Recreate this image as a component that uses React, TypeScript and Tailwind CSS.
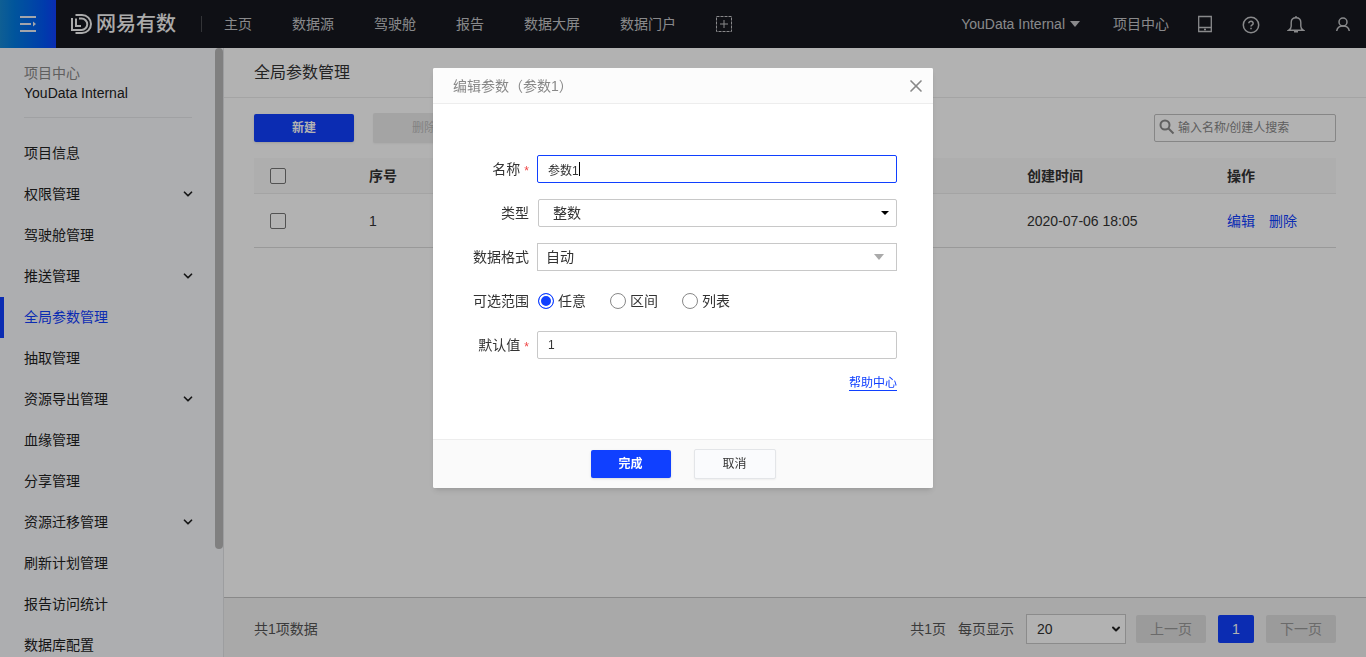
import React, { useState } from 'react';
import { ChevronDown, X } from 'lucide-react';

interface MenuItem {
  label: string;
  expandable?: boolean;
  active?: boolean;
}

const navItems = ['主页', '数据源', '驾驶舱', '报告', '数据大屏', '数据门户'];

const menuItems: MenuItem[] = [
  { label: '项目信息' },
  { label: '权限管理', expandable: true },
  { label: '驾驶舱管理' },
  { label: '推送管理', expandable: true },
  { label: '全局参数管理', active: true },
  { label: '抽取管理' },
  { label: '资源导出管理', expandable: true },
  { label: '血缘管理' },
  { label: '分享管理' },
  { label: '资源迁移管理', expandable: true },
  { label: '刷新计划管理' },
  { label: '报告访问统计' },
  { label: '数据库配置' }
];

const ranges = ['任意', '区间', '列表'];

const Logo = () => (
  <svg width="21" height="20" viewBox="0 0 21 20" fill="none" stroke="currentColor" strokeWidth="2">
    <path d="M1 4v12h9.500a5.700 5.700 0 0 0 0-11.500H8" />
    <path d="M4.500 1H11a9 9 0 0 1 0 18H4.500" />
    <path d="M5 4.500v7.500h5" />
  </svg>
);

const Header = () => (
  <header className="flex h-12 shrink-0 items-center bg-[#16181f] text-sm text-[#c4c5c8]">
    <button
      aria-label="菜单"
      className="flex h-12 w-14 items-center justify-center bg-gradient-to-r from-[#1688d4] to-[#1040ff] text-[#e8ecf5]"
    >
      <svg width="16" height="16" viewBox="0 0 16 16" fill="currentColor">
        <path d="M0 0h16v2H0zM0 7h11v2H0zM0 14h16v2H0zM13 5.500l3 2.500-3 2.500z" />
      </svg>
    </button>
    <a href="#" className="ml-[15px] flex items-center gap-1 text-xl font-medium text-[#f5f5f5]">
      <Logo />
      网易有数
    </a>
    <span className="ml-[25px] h-4 w-px bg-[#4a4b50]" />
    <nav className="ml-[22px] flex items-center gap-10">
      {navItems.map(item => (
        <a key={item} href="#">{item}</a>
      ))}
      <button aria-label="新增">
        <svg width="16" height="16" viewBox="0 0 16 16" fill="none" stroke="currentColor">
          <path d="M.5.500h15v15H.500z" strokeDasharray="3 1" />
          <path d="M8 4v8M4 8h8" />
        </svg>
      </button>
    </nav>
    <div className="ml-auto flex items-center pr-[15px]">
      <button className="flex items-center gap-1">
        YouData Internal
        <svg width="12" height="6" viewBox="0 0 12 6" fill="currentColor">
          <path d="M1 0h10L6 6z" />
        </svg>
      </button>
      <a href="#" className="ml-8">项目中心</a>
      <button aria-label="移动端" className="ml-7">
        <svg width="16" height="18" viewBox="0 0 16 18" fill="none" stroke="currentColor" strokeWidth="1.300">
          <path d="M1.700 1.500h12.600v15H1.700zM2 12.500h12M7 14.500h2" />
        </svg>
      </button>
      <button aria-label="帮助" className="ml-7">
        <svg width="20" height="20" viewBox="0 0 20 20" fill="none" stroke="currentColor" strokeWidth="1.500">
          <circle cx="10" cy="11" r="7.700" />
          <path d="M7.800 9.300a2.200 2 0 1 1 3.400 1.600c-.8.500-1.200.8-1.200 1.700M10 13.700v1.500" />
        </svg>
      </button>
      <button aria-label="通知" className="ml-[26px]">
        <svg width="18" height="18" viewBox="0 0 18 18" fill="none" stroke="currentColor" strokeWidth="1.400">
          <path d="M1.800 15.200c1.500-1 2.400-2 2.400-4V7.500C4.200 4.700 6 2.700 9 2.700s4.800 2 4.800 4.800v3.700c0 2 .9 3 2.400 4z" />
          <path d="M9 1v1.700M7 16.800h4" />
        </svg>
      </button>
      <button aria-label="账户" className="ml-[30px]">
        <svg width="16" height="16" viewBox="0 0 16 16" fill="none" stroke="currentColor" strokeWidth="1.500">
          <circle cx="8" cy="6" r="4" />
          <path d="M1.700 15c.4-3 2.400-5 6.300-5s5.900 2 6.300 5" />
        </svg>
      </button>
    </div>
  </header>
);

const Sidebar = () => (
  <aside className="relative w-56 shrink-0 overflow-hidden border-r border-[#e1e3e6] bg-[#f8f9fc] text-sm text-[#222]">
    <div className="mr-[31px] ml-6 h-[70px] border-b border-[#e6e7ea] pt-[15px] leading-5">
      <p className="text-[#888]">项目中心</p>
      <p>YouData Internal</p>
    </div>
    <ul className="pt-[15px]">
      {menuItems.map(item => (
        <li key={item.label}>
          <a
            href="#"
            className={`flex h-[41px] items-center justify-between border-l-4 pr-7 pb-0.5 pl-5 ${
              item.active ? 'border-[#1040ff] text-[#1040ff]' : 'border-transparent'
            }`}
          >
            {item.label}
            {item.expandable && <ChevronDown size={14} strokeWidth={3} />}
          </a>
        </li>
      ))}
    </ul>
    <div className="absolute top-0 right-0 h-[501px] w-2 rounded-full bg-[#b8b8b8]" />
  </aside>
);

const ParamTable = () => (
  <table className="mt-4 w-full table-fixed border-separate border-spacing-0 text-left text-sm text-[#333]">
    <thead>
      <tr className="h-9 bg-[#fafafa]">
        <th className="w-[100px] border-b border-[#ebebeb] pl-4">
          <input type="checkbox" aria-label="全选" className="block size-4 appearance-none rounded-xs border border-[#767676] bg-white" />
        </th>
        <th className="border-b border-[#ebebeb] pl-[15px]">序号</th>
        <th className="w-[200px] border-b border-[#ebebeb] pl-[15px]">创建时间</th>
        <th className="w-[124px] border-b border-[#ebebeb] pl-[15px]">操作</th>
      </tr>
    </thead>
    <tbody>
      <tr className="h-[54px]">
        <td className="border-b border-[#dcdcdc] pl-4">
          <input type="checkbox" aria-label="选择第1行" className="block size-4 appearance-none rounded-xs border border-[#767676] bg-white" />
        </td>
        <td className="border-b border-[#dcdcdc] pl-[15px]">1</td>
        <td className="border-b border-[#dcdcdc] pl-[15px]">2020-07-06 18:05</td>
        <td className="border-b border-[#dcdcdc] pl-[15px] text-[#1040ff]">
          <a href="#">编辑</a>
          <a href="#" className="ml-3.5">删除</a>
        </td>
      </tr>
    </tbody>
  </table>
);

const Pagination = () => (
  <footer className="flex h-[60px] shrink-0 items-center border-t border-[#c4c4c4] bg-[#f3f3f3] px-[30px] pt-0.5 text-sm text-[#555]">
    <span>共1项数据</span>
    <span className="ml-auto">共1页</span>
    <label htmlFor="page-size" className="ml-3">每页显示</label>
    <div className="relative ml-3">
      <select
        id="page-size"
        defaultValue="20"
        className="block h-[30px] w-[100px] appearance-none border border-[#c8c8c8] bg-white pl-2.5 text-[#333]"
      >
        <option>20</option>
      </select>
      <ChevronDown size={12} strokeWidth={4} className="pointer-events-none absolute top-[9px] right-1 text-[#222]" />
    </div>
    <button disabled className="ml-2.5 h-7 w-[70px] rounded-xs bg-[#dedede] text-[#999]">上一页</button>
    <button className="ml-3 h-7 w-9 rounded-xs bg-[#1040ff] text-white">1</button>
    <button disabled className="ml-3 h-7 w-[70px] rounded-xs bg-[#dedede] text-[#999]">下一页</button>
  </footer>
);

interface FieldProps {
  label: string;
  htmlFor?: string;
  required?: boolean;
  children: React.ReactNode;
}

const Field = ({ label, htmlFor, required, children }: FieldProps) => (
  <div className="flex h-7 items-center gap-2">
    <label htmlFor={htmlFor} className="flex w-24 items-center justify-end gap-1">
      {label}
      {required && <span className="pt-1 text-xs leading-4 text-[#f04545]">*</span>}
    </label>
    <div className="relative flex flex-1 items-center">{children}</div>
  </div>
);

const EditDialog = () => {
  const [name, setName] = useState('参数1');
  const [value, setValue] = useState('1');
  const [range, setRange] = useState('任意');

  return (
    <div className="fixed inset-0 z-10 flex items-start justify-center bg-black/30 pt-[68px]">
      <div role="dialog" aria-label="编辑参数" className="w-[500px] rounded-xs bg-white text-sm text-[#333] shadow-md">
        <div className="flex h-9 items-center justify-between rounded-t-xs border-b border-[#ededed] bg-[#fcfcfc] pr-[7px] pl-5">
          <h2 className="text-[#888]">编辑参数（参数1）</h2>
          <button aria-label="关闭" className="text-[#888]">
            <X size={20} strokeWidth={2} />
          </button>
        </div>

        <form className="flex h-[335px] flex-col gap-4 pt-[51px] pr-9">
          <Field label="名称" htmlFor="name" required>
            <input
              id="name"
              value={name}
              onChange={e => setName(e.target.value)}
              className="h-7 w-full rounded-xs border border-[#1040ff] px-2.5 text-xs caret-transparent outline-none"
            />
            <span className="absolute left-[42px] h-3.5 w-px bg-black" />
          </Field>
          <Field label="类型" htmlFor="type">
            <select id="type" className="ml-px h-7 w-full appearance-none rounded-xs border border-[#c8c8c8] bg-white pl-3.5">
              <option>整数</option>
            </select>
            <svg className="pointer-events-none absolute right-2" width="8" height="4" viewBox="0 0 8 4">
              <path d="M0 0h8L4 4z" />
            </svg>
          </Field>
          <Field label="数据格式" htmlFor="format">
            <select id="format" className="h-7 w-full appearance-none border border-[#c8c8c8] bg-white pl-2">
              <option>自动</option>
            </select>
            <svg className="pointer-events-none absolute right-[13px] text-[#aaa]" width="10" height="6" viewBox="0 0 10 6" fill="currentColor">
              <path d="M0 0h10L5 6z" />
            </svg>
          </Field>
          <Field label="可选范围">
            {ranges.map(item => (
              <label key={item} className="ml-px flex w-[71px] items-center gap-1">
                <input
                  type="radio"
                  name="range"
                  checked={range === item}
                  onChange={() => setRange(item)}
                  className="size-4 appearance-none rounded-full border border-[#888] checked:border-[#1040ff] checked:bg-[#1040ff] checked:shadow-[inset_0_0_0_2px_white]"
                />
                {item}
              </label>
            ))}
          </Field>
          <Field label="默认值" htmlFor="default-value" required>
            <input
              id="default-value"
              value={value}
              onChange={e => setValue(e.target.value)}
              className="h-7 w-full rounded-xs border border-[#c8c8c8] px-2.5 text-xs outline-none"
            />
          </Field>
          <a href="#" className="self-end border-b border-[#1040ff] pt-px text-xs leading-[14px] text-[#1040ff]">帮助中心</a>
        </form>

        <div className="flex h-[49px] items-center justify-center gap-[23px] rounded-b-xs border-t border-[#ededed] bg-[#fafafa] text-xs">
          <button className="h-7 w-20 rounded-xs bg-[#1040ff] font-bold text-white shadow-sm">完成</button>
          <button className="h-[30px] w-[82px] rounded-xs border border-[#e3e5e8] bg-[#fafbfd] shadow-xs">取消</button>
        </div>
      </div>
    </div>
  );
};

const App = () => (
  <div className="flex h-screen flex-col overflow-hidden bg-white font-['Liberation_Sans','Noto_Sans_CJK_SC',sans-serif]">
    <Header />
    <div className="flex min-h-0 flex-1">
      <Sidebar />
      <main className="flex min-w-0 flex-1 flex-col">
        <h1 className="flex h-[50px] shrink-0 items-center border-b border-[#ebebeb] px-[30px] text-base text-[#333]">全局参数管理</h1>
        <div className="flex-1 px-[30px] pt-4">
          <div className="flex h-7 items-center text-xs">
            <button className="h-7 w-[100px] rounded-xs bg-[#1040ff] font-bold text-white shadow-sm">新建</button>
            <button disabled className="ml-[19px] h-[30px] w-[102px] rounded-xs bg-[#ebebeb] text-[#bbb] shadow-xs">删除</button>
            <div className="relative ml-auto">
              <svg className="absolute top-[5px] left-[5px] text-[#8c8c8c]" width="16" height="16" viewBox="0 0 16 16" fill="none" stroke="currentColor" strokeWidth="2">
                <circle cx="6" cy="6" r="4.500" />
                <path d="M9.500 9.500l5 5" />
              </svg>
              <input
                aria-label="搜索"
                placeholder="输入名称/创建人搜索"
                className="block h-7 w-[182px] rounded-xs border border-[#c0c0c0] bg-white pl-[23px] placeholder:text-[#888]"
              />
            </div>
          </div>
          <ParamTable />
        </div>
        <Pagination />
      </main>
    </div>
    <EditDialog />
  </div>
);

export default App;
